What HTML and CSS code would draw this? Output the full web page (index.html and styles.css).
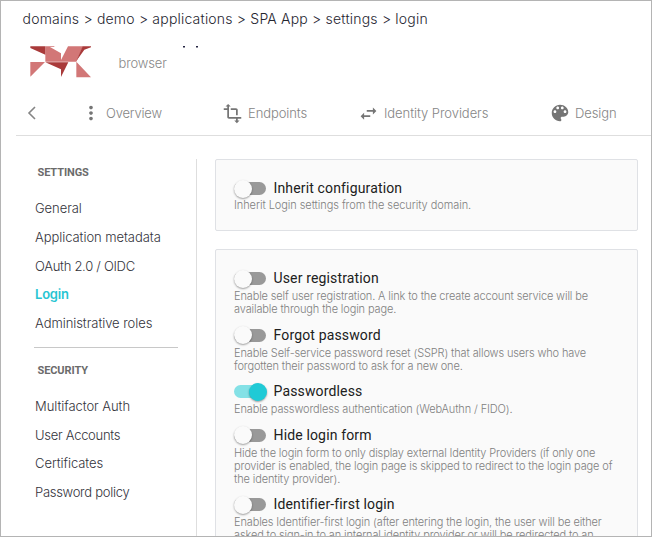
FILE: index.html
```html
<!DOCTYPE html>
<html lang="en">
<head>
<meta charset="utf-8">
<title>SPA App - login settings</title>
<link rel="stylesheet" href="styles.css">
</head>
<body>
<div class="window">
  <div class="breadcrumb">domains &gt; demo &gt; applications &gt; SPA App &gt; settings &gt; login</div>
  <header class="app-header">
    <svg class="logo" width="62" height="32" viewBox="0 0 186 96">
      <path fill="#d27777" d="M49 1H76V3H63L96 22V42L117 1H162L142 47H49ZM4 48H48L4 92ZM142 47L186 94H142Z"/>
      <path fill="#a93a3a" d="M4 1H49V26L4 6ZM161 1H186V4L166 11L142 45ZM49 49H118L96 93V70Z"/>
    </svg>
    <div class="app-type">browser</div>
    <svg class="title-edge" width="16" height="2" viewBox="0 0 16 2"><path fill="#252542" d="M0 0h2v1.500H0zM13 0h2v1.500h-2z"/></svg>
  </header>
  <nav class="tabs">
    <svg class="back" width="10" height="14" viewBox="0 0 10 14"><path d="M8 1L2 7l6 6" fill="none" stroke="#858585" stroke-width="1.6"/></svg>
    <a class="tab overview"><svg width="22" height="22" viewBox="0 0 24 24"><path d="M12 8c1.100 0 2-.9 2-2s-.9-2-2-2-2 .9-2 2 .9 2 2 2zm0 2c-1.100 0-2 .9-2 2s.9 2 2 2 2-.9 2-2-.9-2-2-2zm0 6c-1.100 0-2 .9-2 2s.9 2 2 2 2-.9 2-2-.9-2-2-2z"/></svg><span>Overview</span></a>
    <a class="tab endpoints"><svg width="21" height="21" viewBox="0 0 24 24"><path d="M22 18v-2H8V4h2L7 1 4 4h2v2H2v2h4v8c0 1.100.9 2 2 2h8v2h-2l3 3 3-3h-2v-2h4zM10 8h6v6h2V8c0-1.100-.9-2-2-2h-6v2z"/></svg><span>Endpoints</span></a>
    <a class="tab providers"><svg width="21" height="21" viewBox="0 0 24 24"><path d="M6.990 11L3 15l3.990 4v-3H14v-2H6.990v-3zM21 9l-3.990-4v3H10v2h7.010v3L21 9z"/></svg><span>Identity Providers</span></a>
    <a class="tab design"><svg width="22" height="22" viewBox="0 0 24 24"><path d="M12 3c-4.970 0-9 4.030-9 9s4.030 9 9 9c.83 0 1.500-.67 1.500-1.500 0-.39-.15-.74-.39-1.010-.23-.26-.38-.61-.38-.99 0-.83.67-1.500 1.500-1.500H16c2.760 0 5-2.240 5-5 0-4.420-4.030-8-9-8zm-5.500 9c-.83 0-1.500-.67-1.500-1.500S5.670 9 6.500 9 8 9.670 8 10.500 7.330 12 6.500 12zm3-4C8.670 8 8 7.330 8 6.500S8.670 5 9.500 5s1.500.67 1.500 1.500S10.330 8 9.500 8zm5 0c-.83 0-1.500-.67-1.500-1.500S13.670 5 14.500 5s1.500.67 1.500 1.500S15.330 8 14.500 8zm3 4c-.83 0-1.500-.67-1.500-1.500S16.670 9 17.500 9s1.500.67 1.500 1.500-.67 1.500-1.500 1.500z"/></svg><span>Design</span></a>
  </nav>
  <main class="content">
    <aside class="sidebar">
      <h2>SETTINGS</h2>
      <a>General</a>
      <a>Application metadata</a>
      <a class="tight">OAuth 2.0 / OIDC</a>
      <a class="active">Login</a>
      <a>Administrative roles</a>
      <hr>
      <h2>SECURITY</h2>
      <a>Multifactor Auth</a>
      <a class="tight">User Accounts</a>
      <a>Certificates</a>
      <a class="tight">Password policy</a>
    </aside>
    <div class="panels">
      <section class="card">
        <div class="option"><h3><i class="toggle"></i>Inherit configuration</h3><p>Inherit Login settings from the security domain.</p></div>
      </section>
      <section class="card">
        <div class="option"><h3><i class="toggle"></i>User registration</h3><p>Enable self user registration. A link to the create account service will be<br>available through the login page.</p></div>
        <div class="option"><h3><i class="toggle"></i>Forgot password</h3><p>Enable Self-service password reset (SSPR) that allows users who have<br>forgotten their password to ask for a new one.</p></div>
        <div class="option"><h3><i class="toggle on"></i>Passwordless</h3><p>Enable passwordless authentication (WebAuthn / FIDO).</p></div>
        <div class="option"><h3><i class="toggle"></i>Hide login form</h3><p>Hide the login form to only display external Identity Providers (if only one<br>provider is enabled, the login page is skipped to redirect to the login page of<br>the identity provider).</p></div>
        <div class="option"><h3><i class="toggle"></i>Identifier-first login</h3><p>Enables Identifier-first login (after entering the login, the user will be either<br>asked to sign-in to an internal identity provider or will be redirected to an</p></div>
      </section>
    </div>
  </main>
</div>
</body>
</html>
```
FILE: styles.css
```css
* { box-sizing: border-box; }
body { margin: 0; background: #fff; font-family: Inter, sans-serif; font-weight: 300; }
.window { width: 652px; height: 537px; border: 1px solid #b4b4b4; overflow: hidden; display: flex; flex-direction: column; }
.breadcrumb { height: 45px; flex: none; padding: 8px 0 0 21.5px; font-size: 14px; letter-spacing: 0.2px; line-height: 20px; color: #25252f; white-space: nowrap; }
.app-header { height: 45px; flex: none; display: flex; align-items: flex-start; padding-left: 28px; }
.logo { flex: none; }
.app-type { margin: 8px 0 0 27.5px; width: 48.5px; font-size: 13px; letter-spacing: -0.15px; line-height: 18px; color: #888; }
.title-edge { margin-left: 16px; flex: none; }
.tabs { height: 45px; flex: none; margin-left: 15px; border-bottom: 1px solid #dedede; display: flex; align-items: center; color: #858585; font-size: 13px; letter-spacing: -0.1px; white-space: nowrap; }
.back { margin-left: 11px; flex: none; }
.tab { display: flex; align-items: center; flex: none; }
.tab svg { fill: #757575; flex: none; }
.overview { margin-left: 43px; width: 142px; gap: 4px; letter-spacing: -0.2px; }
.endpoints { width: 136px; gap: 5px; }
.providers { width: 191px; gap: 5px; letter-spacing: -0.06px; }
.design { gap: 4px; }
.content { flex: 1; min-height: 0; display: flex; padding-top: 23px; }
.sidebar { width: 196px; flex: none; border-right: 1px solid #dedede; padding-left: 33px; }
.sidebar h2 { margin: 6px 0 13px 3.5px; font: 700 11px/16px Roboto, sans-serif; letter-spacing: -0.1px; color: #6b6b6b; }
.sidebar a { display: block; height: 28.75px; padding-left: 1px; font-size: 13px; letter-spacing: -0.06px; line-height: 28.75px; color: #33333b; white-space: nowrap; }
.sidebar a.tight { letter-spacing: -0.28px; }
.sidebar a.active { font-weight: 600; letter-spacing: -0.2px; color: #27c5d2; }
.sidebar hr { width: 144px; margin: 9px 0 15px; border: 0; border-top: 1px solid #c8c8c8; }
.panels { margin-left: 18px; width: 423px; flex: none; }
.card { border: 1px solid #dfe1e5; background: #fafafa; border-radius: 2px; padding: 16px 18px 17px; margin-bottom: 18px; }
.option + .option { margin-top: 6.6px; }
.option h3 { margin: 0; display: flex; align-items: center; height: 24px; font: 400 14px/24px Roboto, sans-serif; letter-spacing: 0.15px; color: #202020; }
.option p { margin: 0; font-size: 11px; letter-spacing: -0.13px; line-height: 13px; color: #808080; white-space: nowrap; }
.card:first-child p { margin-top: -1px; margin-bottom: 1px; letter-spacing: -0.07px; }
.toggle { width: 32px; height: 13px; border-radius: 7px; background: #999; display: flex; align-items: center; margin: 1px 7.5px 0 0; flex: none; }
.toggle::before { content: ""; width: 18px; height: 18px; flex: none; border-radius: 50%; background: #fafafa; box-shadow: 0 1px 2px rgba(0,0,0,.38); }
.toggle.on { background: #84e1e6; }
.toggle.on::before { margin-left: 14.5px; background: #20cad6; }
```
